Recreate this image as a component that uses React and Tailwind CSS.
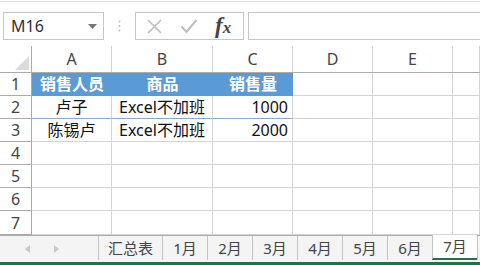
const font = { fontFamily: '"Noto Sans", "Noto Sans CJK SC", sans-serif' };

const cols = ["A", "B", "C", "D", "E", ""];
const colW = ["w-[80px]", "w-[101px]", "w-[80px]", "w-[80px]", "w-[80px]", "flex-1"];

const rows = [
  ["销售人员", "商品", "销售量"],
  ["卢子", "Excel不加班", "1000"],
  ["陈锡卢", "Excel不加班", "2000"],
  [],
  [],
  [],
  [],
];

const tabs = [
  ["汇总表", "w-[64px]"],
  ["1月", "w-[45px]"],
  ["2月", "w-[45px]"],
  ["3月", "w-[45px]"],
  ["4月", "w-[45px]"],
  ["5月", "w-[45px]"],
  ["6月", "w-[45px]"],
];

function FormulaBar() {
  return (
    <div className="h-[45px] border-t border-[#dadada] mt-[1px] flex items-start pt-[10px] pl-[3px]">
      <div className="w-[101px] h-[28px] border border-[#c6c6c6] flex items-center justify-between pl-[7px] pr-[6px]">
        <span className="text-[16px] text-[#333]">M16</span>
        <svg width="9" height="5" viewBox="0 0 9 5">
          <path d="M0 0h9L4.5 5z" fill="#777" />
        </svg>
      </div>
      <div className="w-[31px] h-[28px] flex items-center justify-center">
        <svg width="3" height="12" viewBox="0 0 3 12">
          <circle cx="1.5" cy="1.5" r="1" fill="#bbb" />
          <circle cx="1.5" cy="6" r="1" fill="#bbb" />
          <circle cx="1.5" cy="10.5" r="1" fill="#bbb" />
        </svg>
      </div>
      <div className="w-[109px] h-[28px] border border-[#c6c6c6] flex items-center px-[10px] gap-[17px]">
        <svg width="17" height="17" viewBox="0 0 17 17">
          <path d="M2 2L15 15M15 2L2 15" stroke="#bdbdbd" strokeWidth="1.6" />
        </svg>
        <svg width="18" height="16" viewBox="0 0 18 16">
          <path d="M1.5 8.5L6.5 14L16.5 2" stroke="#bdbdbd" strokeWidth="2" fill="none" />
        </svg>
        <span className="text-[23px] italic font-bold text-[#444] leading-none -mt-[2px]" style={{ fontFamily: '"Liberation Serif", serif' }}>
          f<span className="text-[17px]">x</span>
        </span>
      </div>
      <div className="w-[4px]" />
      <div className="flex-1 h-[28px] border border-[#c6c6c6] border-r-0" />
    </div>
  );
}

function Grid() {
  return (
    <div className="flex flex-col">
      <div className="flex h-[27px] border-b border-[#ababab]">
        <div className="w-[32px] border-r border-[#ababab] relative">
          <svg className="absolute right-[2px] bottom-[2px]" width="14" height="14" viewBox="0 0 14 14">
            <path d="M14 0V14H0z" fill="#dcdcdc" />
          </svg>
        </div>
        {cols.map((c, i) => (
          <div key={i} className={`${colW[i]} border-r border-[#d4d4d4] flex items-center justify-center text-[16px] text-[#444]`}>
            {c}
          </div>
        ))}
      </div>
      {rows.map((r, ri) => (
        <div key={ri} className={`flex ${ri === 6 ? "h-[24px]" : "h-[23px]"}`}>
          <div className="w-[32px] border-r border-b border-[#ababab] flex items-center justify-center text-[16px] text-[#444]">
            {ri + 1}
          </div>
          {cols.map((_, ci) => {
            const v = r[ci] || "";
            const head = ri === 0 && ci < 3;
            return (
              <div
                key={ci}
                className={`${colW[ci]} flex items-center text-[16px] px-[4px] ${
                  head
                    ? "bg-[#5b9bd5] text-white font-bold justify-center border-b border-[#5b9bd5]"
                    : ri === 1 && ci < 3
                    ? "border-b border-[#8aa9c6] border-r border-r-[#d4d4d4] text-[#111]"
                    : "border-r border-b border-[#d4d4d4] text-[#111]"
                } ${!head && ci === 2 ? "justify-end" : !head ? "justify-center" : ""}`}
              >
                {v}
              </div>
            );
          })}
        </div>
      ))}
    </div>
  );
}

function Tabs() {
  return (
    <div className="h-[27px] bg-[#f4f4f4] border-t border-[#ababab] flex items-stretch">
      <div className="w-[98px] flex items-center">
        <svg className="ml-[25px]" width="5" height="8" viewBox="0 0 5 8">
          <path d="M5 0V8L0 4z" fill="#c8c8c8" />
        </svg>
        <svg className="ml-[24px]" width="5" height="8" viewBox="0 0 5 8">
          <path d="M0 0V8L5 4z" fill="#c8c8c8" />
        </svg>
      </div>
      {tabs.map(([t, w]) => (
        <div key={t} className={`${w} h-[24px] border-l border-[#c4c4c4] flex items-center justify-center text-[15px] text-[#444]`}>
          {t}
        </div>
      ))}
      <div className="w-[45px] h-[25px] bg-white border-l border-[#c4c4c4] border-b-[2px] border-b-[#217346] flex items-center justify-center text-[15px] text-[#444] -mt-[1px]">
        7月
      </div>
      <div className="flex-1 border-l border-[#c4c4c4] h-[24px]" />
    </div>
  );
}

export default function App() {
  return (
    <div className="w-[480px] h-[265px] bg-white overflow-hidden flex flex-col" style={font}>
      <FormulaBar />
      <Grid />
      <Tabs />
      <div className="flex-1 bg-[#217346]" />
    </div>
  );
}
